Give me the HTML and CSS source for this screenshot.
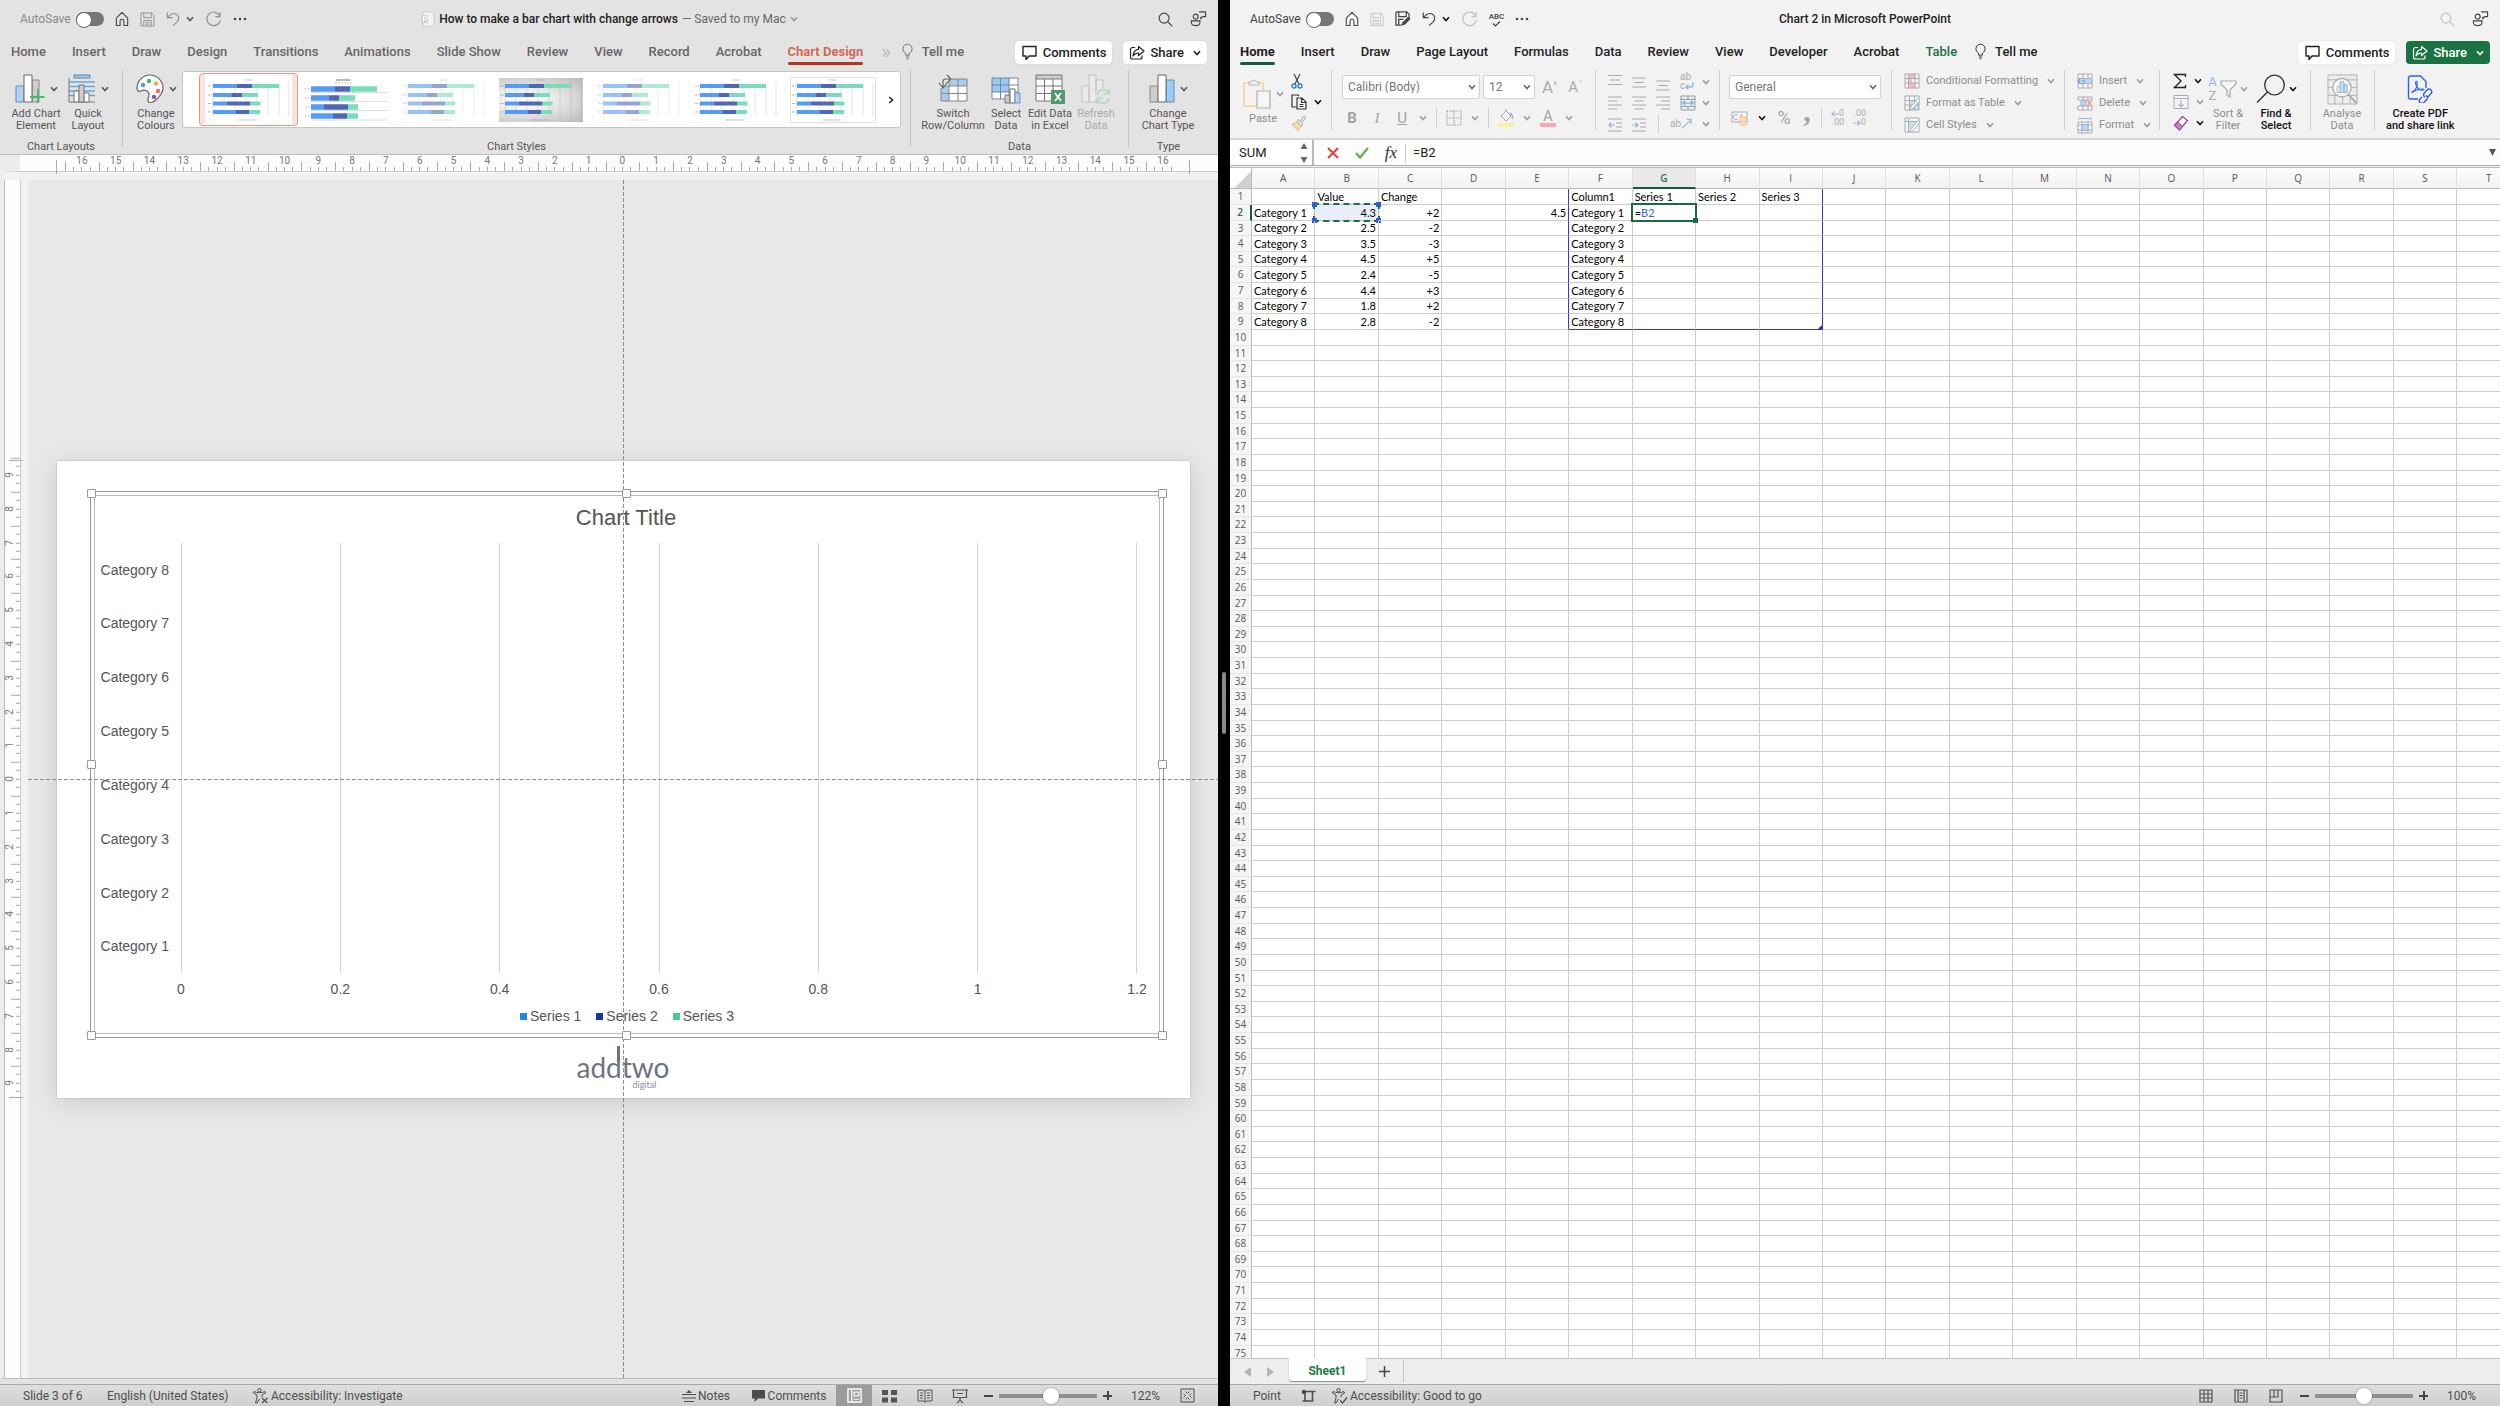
FILE: index.html
```
<!DOCTYPE html>
<html lang="en-GB">
<head>
<meta charset="utf-8">
<title>Chart 2 in Microsoft PowerPoint</title>
<link rel="stylesheet" href="styles.css">
</head>
<body>
<svg class="sprite" aria-hidden="true">
  <symbol id="chev" viewBox="0 0 8 6"><path d="M1 1.2 4 4.6 7 1.2" fill="none" stroke="currentColor" stroke-width="1.5"/></symbol>
  <symbol id="home" viewBox="0 0 16 18"><path d="M1.5 8 8 1.5 14.500 8v8.500h-4.300v-5a2.200 2.200 0 0 0-4.400 0v5H1.500z" fill="none" stroke="currentColor" stroke-width="1.2" stroke-linejoin="round"/></symbol>
  <symbol id="save" viewBox="0 0 16 16"><path d="M1 1h11.500L15 3.500V15H1zM4 1v5h8V1M4 15V9h8v6M6 11h4M6 13h4" fill="none" stroke="currentColor"/></symbol>
  <symbol id="saveas" viewBox="0 0 17 17"><path d="M1 1h11.500L15 3.500V8M7 15H1V1M4 1v5h8V1M4 15V9h5" fill="none" stroke="currentColor" stroke-width="1.300"/><path d="M7 15.500 8 12l6-6 2.500 2.500-6 6z" fill="currentColor"/></symbol>
  <symbol id="undo" viewBox="0 0 16 17"><path d="M1.500 1v6h6M1.500 7C5 3 8 1.500 11 2.500c4 1.500 4.500 6 2 9L8 16" fill="none" stroke="currentColor" stroke-width="1.300"/></symbol>
  <symbol id="redo" viewBox="0 0 18 17"><path d="M16 1v5h-5M16 6A7.200 7.200 0 1 0 16.200 10" fill="none" stroke="currentColor" stroke-width="1.200"/></symbol>
  <symbol id="dots" viewBox="0 0 14 4"><g fill="currentColor"><circle cx="2" cy="2" r="1.300"/><circle cx="7" cy="2" r="1.300"/><circle cx="12" cy="2" r="1.300"/></g></symbol>
  <symbol id="search" viewBox="0 0 16 16"><circle cx="6.500" cy="6.500" r="5.300" fill="none" stroke="currentColor" stroke-width="1.200"/><path d="m10.300 10.300 5 5" stroke="currentColor" stroke-width="1.300"/></symbol>
  <symbol id="person" viewBox="0 0 18 18"><g fill="none" stroke="currentColor" stroke-width="1.200"><circle cx="6" cy="6.500" r="2.600"/><path d="M1.500 11h9v2c0 4-9 4-9 0z"/><path d="M9.500 1.500h7v5h-3l-2 2v-2"/></g></symbol>
  <symbol id="bulb" viewBox="0 0 12 18"><path d="M4 13v-2C2 9.500 1 8 1 6a5 5 0 0 1 10 0c0 2-1 3.500-3 5v2zM4.200 15h3.600M5 17h2" fill="none" stroke="currentColor"/></symbol>
  <symbol id="bubble" viewBox="0 0 16 16"><path d="M1.500 1.500h13v9.500H7.500L4.500 14.500V11h-3z" fill="none" stroke="currentColor" stroke-width="1.400" stroke-linejoin="round"/></symbol>
  <symbol id="share" viewBox="0 0 16 16"><path d="M6 2.500H3.500a2 2 0 0 0-2 2V12a2 2 0 0 0 2 2H11a2 2 0 0 0 2-2v-1.500M9.500 1.500 15 6l-5.500 4.500V8C7 8 5.500 8.500 4 11c.3-4 2.200-6.300 5.500-6.700z" fill="none" stroke="currentColor" stroke-width="1.200" stroke-linejoin="round"/></symbol>
  <symbol id="pptdoc" viewBox="0 0 15 16"><path d="M3 1h8l3 3v11H3z" fill="#f4f4f4" stroke="#ccc"/><path d="M1 4h7v8H1z" fill="#d2d2d2"/><path d="M3.500 10.500v-5h2a1.500 1.500 0 0 1 0 3h-2" fill="none" stroke="#fff"/></symbol>

  <symbol id="addchart" viewBox="0 0 30 30"><path d="M1 12h8v16H1z" fill="#b4d2ee" stroke="#5a8fbe"/><path d="M17 6h7v22h-7z" fill="#cfcccb" stroke="#8d8a88"/><path d="M9 1h8v27H9z" fill="#fff" stroke="#666"/><path d="M23 15v14M15 23h14.500" stroke="#4fb573" stroke-width="2"/></symbol>
  <symbol id="quick" viewBox="0 0 28 30"><path d="M6 1h16v3H6z" fill="#a9c9e8" stroke="#5585b5"/><path d="M1 8h26M1 12.500h26M1 17h26M1 21.500h26" stroke="#64a5dc" stroke-width="1.500"/><path d="M1 4v24h26" fill="none" stroke="#777"/><path d="M6 17h5v11H6zM16 19h5v9h-5z" fill="#fff" stroke="#777"/><path d="M11 11h5v17h-5z" fill="#cfcccb" stroke="#777"/></symbol>
  <symbol id="palette" viewBox="0 0 28 30"><path d="M14 1C7 1 1 7 1 14c0 3 2 4 4 3 4-2 8 0 8 4 0 3-2 4-1 6 1 3 6 1 9-2 3-3 6-7 6-11C27 7 21 1 14 1z" fill="#fdfdfd" stroke="#666" stroke-width="1.200"/><circle cx="7" cy="11" r="2.200" fill="#5a9bd0"/><circle cx="13" cy="7" r="2.200" fill="#4fae72"/><circle cx="20" cy="9.500" r="2.200" fill="#f2a35e"/><circle cx="22" cy="17" r="2.200" fill="#ee6a6a"/><circle cx="18" cy="23" r="2.200" fill="#a24bb3"/></symbol>
  <symbol id="switch" viewBox="0 0 30 30"><path d="M3 5h26v22H3z" fill="#fff"/><path d="M11 5h18v7H11zM3 12h8v15H3z" fill="#a9cdec"/><path d="M3 5h26v22H3zM3 12h26M3 19.500h26M11 5v22M20 5v22" fill="none" stroke="#858585"/><path d="M0 1h14v4L5 14H0z" fill="#e3e3e3"/><path d="M1 9l4 5 4-5M5 14V8c0-2 1-3 3-3h5M9 1l4 4-4 4" fill="none" stroke="#666" stroke-width="1.200"/></symbol>
  <symbol id="select" viewBox="0 0 30 30"><path d="M1 4h26v21H1z" fill="#fff"/><path d="M1 4h17v14H1z" fill="#9cc7ee"/><path d="M1 4h26v21H1zM1 11h26M1 18h26M9.500 4v21M18 4v21" fill="none" stroke="#6b87a3"/><path d="M14 21h5v8h-5z" fill="#cfcccb" stroke="#777"/><path d="M19 15h5v14h-5z" fill="#fff" stroke="#666"/><path d="M24 19h5v10h-5z" fill="#b4d6f4" stroke="#6b93b8"/></symbol>
  <symbol id="editx" viewBox="0 0 30 30"><path d="M1 1h26v26H1z" fill="#fff"/><path d="M1 1h26v4H1z" fill="#cfcccb"/><path d="M1 1h26v26H1zM1 5h26M1 12h26M1 19.500h26M9.500 5v22M18 5v22" fill="none" stroke="#777"/><path d="M16 16h14v14H16z" fill="#4d9a6c"/><path d="m20 19 6 8M26 19l-6 8" stroke="#fff" stroke-width="1.800"/></symbol>
  <symbol id="refresh" viewBox="0 0 30 30"><path d="M1 12h7v16H1zM8 1h7v27H8zM15 6h7v14h-7z" fill="#eaeaea" stroke="#c2c2c2"/><circle cx="22" cy="22" r="8" fill="#e3e3e3"/><path d="M16 21a6.500 6.500 0 0 1 12-2M28.500 14.500V20H23M28.500 24a6.500 6.500 0 0 1-12 2M16 30v-5.500h5.500" fill="none" stroke="#b3d9c0" stroke-width="1.600"/></symbol>
  <symbol id="ctype" viewBox="0 0 26 30"><path d="M1 12h8v16H1z" fill="#cfcccb" stroke="#8d8a88"/><path d="M17 6h8v22h-8z" fill="#9ccbf5" stroke="#5a8fbe"/><path d="M9 1h8v27H9z" fill="#fff" stroke="#666"/></symbol>

  <symbol id="bars" viewBox="0 0 84 44">
    <path d="M6 4v34M17 4v34M28 4v34M39 4v34M50 4v34M61 4v34M72 4v34M82 4v34" stroke="#8888" stroke-width=".4"/>
    <path d="M38 2h8M32 42h18M1 8h4M1 17h4M1 25.500h4M1 34h4" stroke="#999" stroke-width=".7" stroke-dasharray="2 .6"/>
    <path d="M6 8h24M6 17h19M6 25.500h13.500M6 34h23" stroke="#579bf9" stroke-width="3.800"/>
    <path d="M30 8h15M25 17h10M19.500 25.500h24M29 34h13" stroke="#5068b4" stroke-width="3.800"/>
    <path d="M45 8h27M35 17h16M43.500 25.500h10M42 34h11" stroke="#7bdcbd" stroke-width="3.800"/>
  </symbol>
  <symbol id="bars-wide" viewBox="0 0 84 44">
    <path d="M6 14.500h76M6 23.500h76M6 32.500h76M6 42h76" stroke="#aaa" stroke-width=".4"/>
    <path d="M31 2h15" stroke="#555" stroke-width="1" stroke-dasharray="2 .5"/><path d="M30 5h17M0 11h5M0 20h5M0 29h5M0 38h5" stroke="#999" stroke-width=".6" stroke-dasharray="2 1"/>
    <path d="M6 11h24M6 20h18M6 29h13M6 38h22" stroke="#579bf9" stroke-width="5.400"/>
    <path d="M30 11h15M24 20h10M19 29h24M28 38h14" stroke="#5068b4" stroke-width="5.400"/>
    <path d="M45 11h27M34 20h16M43 29h10M42 38h11" stroke="#7bdcbd" stroke-width="5.400"/>
  </symbol>

  <symbol id="notes" viewBox="0 0 14 14"><path d="M0 5.500h14M0 9h14M2 12.500h10" stroke="currentColor" stroke-width="1.200"/><path d="m4 4 3-3 3 3z" fill="currentColor"/></symbol>
  <symbol id="comm" viewBox="0 0 14 14"><path d="M0 1h13v8.500H6L2.500 13V9.500H0z" fill="currentColor"/></symbol>
  <symbol id="a11y" viewBox="0 0 16 16"><g fill="none" stroke="currentColor"><circle cx="6.500" cy="2.200" r="1.700"/><path d="M1 3.500c3 1.600 8 1.600 11 0l.5 1.500-3.500 2v2M1 3.500 .5 5 4 7v3l-1.500 5h1.500L6.500 11"/></g></symbol>
  <symbol id="a11y-x" viewBox="0 0 16 16"><use href="#a11y"/><path d="m9 10 5.500 5M14.500 10 9 15" stroke="currentColor" stroke-width="1.200"/></symbol>
  <symbol id="a11y-ok" viewBox="0 0 16 16"><use href="#a11y"/><path d="m8 12.500 2.500 2.500L15 9.500" fill="none" stroke="currentColor" stroke-width="1.200"/></symbol>
  <symbol id="normal" viewBox="0 0 16 16"><path d="M1 1h14v14H1z" fill="none" stroke="#fff" stroke-width="1.500"/><path d="M5 1v14M7.500 4.500h5v4h-5zM7 12h6" fill="none" stroke="#fff" stroke-width="1.300"/></symbol>
  <symbol id="sorter" viewBox="0 0 16 14"><path d="M0 1h6v5H0zM9 1h6v5H9zM0 8.500h6v5H0zM9 8.500h6v5H9z" fill="currentColor"/></symbol>
  <symbol id="reading" viewBox="0 0 16 16"><path d="M1 2h5l2 1 2-1h5v11h-5l-2 1-2-1H1zM8 3v11M3 5h3M3 7.500h3M3 10h3M10 5h3M10 7.500h3M10 10h3" fill="none" stroke="currentColor"/></symbol>
  <symbol id="present" viewBox="0 0 16 16"><path d="M0 2h16M1.500 2v7.500h13V2M5 5.500h6M8 10v3M5 15l3-3 3 3" fill="none" stroke="currentColor" stroke-width="1.200"/></symbol>
  <symbol id="fit" viewBox="0 0 15 15"><path d="M1 1h13v13H1zM5.500 3.500 7.500 5.500l2-2M5.500 11.500l2-2 2 2M3.500 5.500l2 2-2 2M11.500 5.500l-2 2 2 2" fill="none" stroke="currentColor"/></symbol>
  <symbol id="macro" viewBox="0 0 15 14"><path d="M5 2.500h9.500M11.500 2.500v9M4 4.500v7M1.500 12h11" fill="none" stroke="currentColor" stroke-width="1.600"/><circle cx="3" cy="3" r="2.300" fill="currentColor"/></symbol>
  <symbol id="vgrid" viewBox="0 0 14 14"><path d="M1 1h12v12H1zM1 5h12M1 9h12M5 1v12M9 1v12" fill="none" stroke="currentColor" stroke-width="1.200"/></symbol>
  <symbol id="vpage" viewBox="0 0 14 14"><path d="M1 1h12v12H1zM4 1.500v11M10 1.500v11M5.500 4h3M5.500 6.500h3M5.500 9h3" fill="none" stroke="currentColor" stroke-width="1.200"/></symbol>
  <symbol id="vbreak" viewBox="0 0 14 14"><path d="M1 1h12v12H1zM1 8h8V1M5 1v7" fill="none" stroke="currentColor" stroke-width="1.200"/></symbol>

  <symbol id="paste" viewBox="0 0 28 30"><path d="M1 4h19v23H1z" fill="#fdf3e6" stroke="#f0cfa4" stroke-width="1.500"/><path d="M4 6h13v18H4z" fill="#f2f2f2"/><path d="M6 6V3h3a2 2 0 0 1 4 0h3v3z" fill="#f5f5f5" stroke="#b5b5b5"/><path d="M14 12h13v17H14z" fill="#f5f5f5" stroke="#b0b0b0" stroke-width="1.200"/></symbol>
  <symbol id="cut" viewBox="0 0 12 16"><path d="M3 1l5 10M9 1 4 11" stroke="#444" stroke-width="1.200"/><g fill="none" stroke="#2f7fd0" stroke-width="1.400"><circle cx="3" cy="13" r="2"/><circle cx="9" cy="13" r="2"/></g></symbol>
  <symbol id="copy" viewBox="0 0 16 16"><path d="M6 13H1V1h6l1 1M6 4h5l4 4v7H6zM10.500 4v4.500H15M8.500 10.500h4M8.500 12.500h4" fill="none" stroke="#333" stroke-width="1.200"/></symbol>
  <symbol id="brush" viewBox="0 0 16 16"><path d="m1 9 6-2 3 4-3 5z" fill="#fbd9ae" stroke="#eebb85"/><path d="m6 6 4 5 2-1.500L8 4.500zM9.500 6 13 1l2 1.500-4 5" fill="#eee" stroke="#aaa"/></symbol>
  <symbol id="borders" viewBox="0 0 16 16"><path d="M1 1h14v14H1zM8 1v14M1 8h14" fill="none" stroke="#999" stroke-width="1.200" stroke-dasharray="1.200 1"/></symbol>
  <symbol id="fill" viewBox="0 0 16 18"><path d="m3 7 5-5 5 5-5 5zM8 2V0" fill="#f6f6f6" stroke="#a8a8a8"/><path d="M12 4c2 1 3 4 2.500 6" fill="none" stroke="#8fb9dc" stroke-width="1.500"/><path d="M0 14h16v4H0z" fill="#f5f2a0"/></symbol>
  <symbol id="al-t" viewBox="0 0 14 20"><path d="M0 3.500h14M2 8h10M0 12.500h14" stroke="#aaa" stroke-width="1.200"/></symbol>
  <symbol id="al-m" viewBox="0 0 14 20"><path d="M0 6h14M2 10.500h10M0 15h14" stroke="#aaa" stroke-width="1.200"/></symbol>
  <symbol id="al-b" viewBox="0 0 14 20"><path d="M0 9h14M2 13.500h10M0 18h14" stroke="#aaa" stroke-width="1.200"/></symbol>
  <symbol id="al-l" viewBox="0 0 14 20"><path d="M0 4h14M0 8h9M0 12h14M0 16h9" stroke="#aaa" stroke-width="1.200"/></symbol>
  <symbol id="al-c" viewBox="0 0 14 20"><path d="M0 4h14M2.500 8h9M0 12h14M2.500 16h9" stroke="#aaa" stroke-width="1.200"/></symbol>
  <symbol id="al-r" viewBox="0 0 14 20"><path d="M0 4h14M5 8h9M0 12h14M5 16h9" stroke="#aaa" stroke-width="1.200"/></symbol>
  <symbol id="ind-l" viewBox="0 0 14 20"><path d="M0 5h14M8 9h6M8 13h6M0 17h14" stroke="#aaa" stroke-width="1.200"/><path d="M7 11H1m2.500-2.500L1 11l2.500 2.500" fill="none" stroke="#8fb9dc" stroke-width="1.200"/></symbol>
  <symbol id="ind-r" viewBox="0 0 14 20"><path d="M0 5h14M8 9h6M8 13h6M0 17h14" stroke="#aaa" stroke-width="1.200"/><path d="M0 11h6M3.500 8.500 6 11l-2.500 2.500" fill="none" stroke="#8fb9dc" stroke-width="1.200"/></symbol>
  <symbol id="merge" viewBox="0 0 16 20"><path d="M1 3h14v14H1z" fill="#e2eef8" stroke="#9a9a9a"/><path d="M1 6.500h14M1 13.500h14M8 3v3.500M8 13.500V17" stroke="#9a9a9a"/><path d="M3 10h10M5 8l-2 2 2 2M11 8l2 2-2 2" fill="none" stroke="#74a9d8" stroke-width="1.200"/></symbol>
  <symbol id="returnarrow" viewBox="0 0 9 9"><path d="M8 0v3a2 2 0 0 1-2 2H1M3.500 2.500 1 5l2.500 2.500" fill="none" stroke="#8fb9dc" stroke-width="1.300"/></symbol>
  <symbol id="dirarrow" viewBox="0 0 12 12"><path d="M1 11 11 2M6 1.500h5v5" fill="none" stroke="#8fb9dc" stroke-width="1.200"/></symbol>
  <symbol id="money" viewBox="0 0 18 17"><path d="M1 2h15v10H1z" fill="#f4f4f4" stroke="#aaa"/><path d="M6.500 5a2.500 2.500 0 1 0 0 4M12 5a2.500 2.500 0 0 0-3 2" fill="none" stroke="#aaa"/><path d="M9 8.500c0-2 7-2 7 0V14c0 2-7 2-7 0z" fill="#fbe0c6" stroke="#efb98a"/><path d="M9 11c1 1.300 6 1.300 7 0" fill="none" stroke="#efb98a"/></symbol>
  <symbol id="arr-l" viewBox="0 0 9 8"><path d="M9 4H1m3-3L1 4l3 3" fill="none" stroke="#8fb9dc" stroke-width="1.200"/></symbol>
  <symbol id="arr-r" viewBox="0 0 9 8"><path d="M0 4h8M5 1l3 3-3 3" fill="none" stroke="#8fb9dc" stroke-width="1.200"/></symbol>
  <symbol id="cond" viewBox="0 0 16 16"><path d="M1 1h14v14H1z" fill="#f6f6f6"/><path d="M4 1h7v4H4zM4 5h4v5H4zM4 10h7v5H4z" fill="#f6bcbc"/><path d="M1 1h14v14H1zM1 5.500h14M1 10h14M4.500 1v14M11 1v14" fill="none" stroke="#aaa"/></symbol>
  <symbol id="fmtt" viewBox="0 0 16 16"><path d="M1 1h14v14H1z" fill="#f6f6f6"/><path d="M6 6h9v9H6z" fill="#c5dff3"/><path d="M1 1h14v14H1zM1 5.500h14M1 10h14M5.500 1v14M10.500 1v14" fill="none" stroke="#aaa"/><path d="M14.500 3 8 10.500l-3.500 5 5-2.500L16 5z" fill="#fff" stroke="#8fb9dc"/></symbol>
  <symbol id="cstyle" viewBox="0 0 16 16"><path d="M1 1h14v14H1z" fill="#f6f6f6"/><path d="M4.500 4.500h8v7h-8z" fill="#c5dff3"/><path d="M1 1h14v14H1zM1 4.500h14M4.500 1v14" fill="none" stroke="#aaa"/><path d="M14.500 3 8 10.500l-3.500 5 5-2.500L16 5z" fill="#fff" stroke="#8fb9dc"/></symbol>
  <symbol id="ins" viewBox="0 0 16 16"><path d="M1 1h14v14H1z" fill="#f6f6f6"/><path d="M1 1h14v14H1zM1 5.500h14M1 10.500h14M6 1v14M11 1v14" fill="none" stroke="#aaa"/><path d="M7 5.500h8v5H7z" fill="#b9d8f0" stroke="#8fb9dc"/><path d="M8 8H1m3-3L1 8l3 3" fill="none" stroke="#6ea7d8" stroke-width="1.200"/></symbol>
  <symbol id="del" viewBox="0 0 16 16"><path d="M1 2h14v3H1zM1 11h14v4H1zM6 2v3M11 2v3M6 11v4M11 11v4" fill="#f6f6f6" stroke="#aaa"/><path d="M4 6h5v4.500H4z" fill="#b9d8f0" stroke="#8fb9dc"/><path d="m10 5 5 6M15 5l-5 6" stroke="#f09a9a" stroke-width="1.300"/></symbol>
  <symbol id="fmt" viewBox="0 0 16 18"><path d="M2 1v3M14 1v3M3 2.500h10" stroke="#8fb9dc"/><path d="M1 6h14v11H1zM1 9h14M1 14h14M5 6v11M11 6v11" fill="#f6f6f6" stroke="#aaa"/><path d="M5 8.500h6v6H5z" fill="#b9d8f0" stroke="#8fb9dc"/></symbol>
  <symbol id="sigma" viewBox="0 0 14 16"><path d="M12.500 4V1.500h-11L8 8l-6.500 6.500h11V12" fill="none" stroke="#222" stroke-width="1.300"/></symbol>
  <symbol id="filld" viewBox="0 0 16 16"><path d="M1 1.500h14v13H1zM1 4.500h14" fill="#f6f6f6" stroke="#aaa"/><path d="M8 6v7M5.500 10.500 8 13l2.500-2.500" fill="none" stroke="#8fb9dc" stroke-width="1.200"/></symbol>
  <symbol id="eraser" viewBox="0 0 16 16"><path d="m1.500 10.500 8-9 5 4-8 9.500z" fill="#fff" stroke="#933a9a" stroke-width="1.200"/><path d="m1.500 10.500 3-3.500 5 4.500-3 3.500z" fill="#c583c9" stroke="#933a9a"/></symbol>
  <symbol id="funnel" viewBox="0 0 17 18"><path d="M1 1h15v3l-6 6v7l-3-2v-5L1 4z" fill="#f6f6f6" stroke="#aaa" stroke-width="1.200"/></symbol>
  <symbol id="find" viewBox="0 0 30 30"><circle cx="18.500" cy="11" r="9.800" fill="none" stroke="#333" stroke-width="1.300"/><path d="M11.500 18 1 28.500" stroke="#333" stroke-width="1.500"/></symbol>
  <symbol id="analyse" viewBox="0 0 32 32"><path d="M1 1h30v30H1zM1 6h30M1 14h30M1 22h30M8 22v9M16 22v9M24 22v9" fill="#ececec" stroke="#b0b0b0"/><circle cx="15.500" cy="14" r="9.500" fill="#f8f8f8" stroke="#a8a8a8" stroke-width="1.200"/><path d="M10.500 13h3v6h-3z" fill="#fff" stroke="#aaa"/><path d="M13.500 8h4v11h-4zM17.500 11h3.500v8h-3.500z" fill="#c5dff3" stroke="#8fb9dc"/><path d="m22 21 8.500 9" stroke="#a8a8a8" stroke-width="1.800"/></symbol>
  <symbol id="pdf" viewBox="0 0 26 28"><g fill="none" stroke="#2d63e2" stroke-width="1.400"><path d="M11 24H3.500a2 2 0 0 1-2-2V3a2 2 0 0 1 2-2h10L19 6.500V13"/><path d="M5 17c5-2 6-8 5-10s-2 0-1 3 4 6 7 5-2-1.500-6 0-6 3.500-5 2z" stroke-width="1.100"/><path d="m15 22-2 2a2.600 2.600 0 0 0 4 3.500l3-3.500c1-1.500 0-3-1-3.500M21 22l3-3.500a2.600 2.600 0 0 0-4-3.500l-3 3.500c-1 1.500 0 3 1 3.500"/></g></symbol>
</svg>

<main class="split">
  <section class="app ppt" aria-label="PowerPoint">
    <header class="titlebar">
      <div class="quick">
        <label class="autosave">AutoSave <input type="checkbox" class="toggle"></label>
        <button aria-label="Home"><svg width="14" height="16"><use href="#home"/></svg></button>
        <button class="dim" aria-label="Save"><svg width="15" height="15"><use href="#save"/></svg></button>
        <button class="dim pair" aria-label="Undo"><svg width="14" height="16"><use href="#undo"/></svg><svg class="chev"><use href="#chev"/></svg></button>
        <button class="dim" aria-label="Redo"><svg width="17" height="16"><use href="#redo"/></svg></button>
        <button aria-label="More"><svg width="14" height="4"><use href="#dots"/></svg></button>
      </div>
      <h1 class="doc"><svg width="15" height="16"><use href="#pptdoc"/></svg><span>How to make a bar chart with change arrows</span><span class="muted">— Saved to my Mac</span><svg class="chev muted"><use href="#chev"/></svg></h1>
      <div class="corner">
        <button aria-label="Search"><svg width="15" height="15"><use href="#search"/></svg></button>
        <button aria-label="Presence"><svg width="17" height="18"><use href="#person"/></svg></button>
      </div>
    </header>
    <nav class="tabs">
      <button>Home</button><button>Insert</button><button>Draw</button><button>Design</button><button>Transitions</button><button>Animations</button><button>Slide Show</button><button>Review</button><button>View</button><button>Record</button><button>Acrobat</button><button class="on">Chart Design</button>
      <span class="more">»</span>
      <button class="tell"><svg width="11" height="17"><use href="#bulb"/></svg>Tell me</button>
      <div class="actions">
        <button class="pill"><svg width="17" height="16"><use href="#bubble"/></svg>Comments</button>
        <button class="pill"><svg width="16" height="16"><use href="#share"/></svg>Share<svg class="chev"><use href="#chev"/></svg></button>
      </div>
    </nav>
    <div class="ribbon ppt-ribbon">
      <div class="group g-layouts">
        <div class="row">
          <button class="big w52"><span class="pic"><svg width="30" height="30"><use href="#addchart"/></svg><svg class="chev"><use href="#chev"/></svg></span>Add Chart<br>Element</button>
          <button class="big w52"><span class="pic"><svg width="28" height="30"><use href="#quick"/></svg><svg class="chev"><use href="#chev"/></svg></span>Quick<br>Layout</button>
        </div>
        <div class="caption">Chart Layouts</div>
      </div>
      <div class="group g-styles">
        <div class="row">
          <button class="big w52"><span class="pic"><svg width="28" height="30"><use href="#palette"/></svg><svg class="chev"><use href="#chev"/></svg></span>Change<br>Colours</button>
          <div class="gallery">
            <button class="style on"><svg><use href="#bars"/></svg></button>
            <button class="style"><svg><use href="#bars-wide"/></svg></button>
            <button class="style pale"><svg><use href="#bars"/></svg></button>
            <button class="style metal"><svg><use href="#bars"/></svg></button>
            <button class="style pale"><svg><use href="#bars"/></svg></button>
            <button class="style"><svg><use href="#bars"/></svg></button>
            <button class="style framed"><svg><use href="#bars"/></svg></button>
            <button class="next" aria-label="More styles"><svg class="chev"><use href="#chev"/></svg></button>
          </div>
        </div>
        <div class="caption">Chart Styles</div>
      </div>
      <div class="group g-data">
        <div class="row">
          <button class="big w64"><span class="pic"><svg width="30" height="30"><use href="#switch"/></svg></span>Switch<br>Row/Column</button>
          <button class="big w42"><span class="pic"><svg width="30" height="30"><use href="#select"/></svg></span>Select<br>Data</button>
          <button class="big w46"><span class="pic"><svg width="30" height="30"><use href="#editx"/></svg></span>Edit Data<br>in Excel</button>
          <button class="big w46 off"><span class="pic"><svg width="30" height="30"><use href="#refresh"/></svg></span>Refresh<br>Data</button>
        </div>
        <div class="caption">Data</div>
      </div>
      <div class="group g-type">
        <div class="row">
          <button class="big w64"><span class="pic"><svg width="26" height="30"><use href="#ctype"/></svg><svg class="chev"><use href="#chev"/></svg></span>Change<br>Chart Type</button>
        </div>
        <div class="caption">Type</div>
      </div>
    </div>
    <div class="editor">
      <div class="hruler"><div class="scale" id="hscale"></div></div>
      <div class="vruler"><div class="scale" id="vscale"></div></div>
      <div class="canvas">
        <article class="slide">
          <figure class="frame">
            <div class="chart">
              <h2>Chart Title</h2>
              <div class="plot">
                <ul class="cats"><li>Category 8</li><li>Category 7</li><li>Category 6</li><li>Category 5</li><li>Category 4</li><li>Category 3</li><li>Category 2</li><li>Category 1</li></ul>
                <div class="lines"><i></i><i></i><i></i><i></i><i></i><i></i></div>
              </div>
              <div class="axis"><span>0</span><span>0.2</span><span>0.4</span><span>0.6</span><span>0.8</span><span>1</span><span>1.2</span></div>
              <ul class="legend"><li class="s1">Series 1</li><li class="s2">Series 2</li><li class="s3">Series 3</li></ul>
            </div>
            <i class="knob tl"></i><i class="knob tc"></i><i class="knob tr"></i><i class="knob ml"></i><i class="knob mr"></i><i class="knob bl"></i><i class="knob bc"></i><i class="knob br"></i>
          </figure>
          <div class="logo"><span class="word">ad<span class="tall">d</span>two</span><span class="sub">digital</span></div>
        </article>
        <i class="guide-v"></i><i class="guide-h"></i>
      </div>
    </div>
    <footer class="status">
      <span class="s-slide">Slide 3 of 6</span><span class="s-lang">English (United States)</span>
      <button><svg width="16" height="16"><use href="#a11y-x"/></svg>Accessibility: Investigate</button>
      <div class="right">
        <button class="s-notes"><svg width="14" height="14"><use href="#notes"/></svg>Notes</button>
        <button class="s-comm"><svg width="14" height="14"><use href="#comm"/></svg>Comments</button>
        <button class="view on" aria-label="Normal"><svg width="15" height="15"><use href="#normal"/></svg></button>
        <button class="view" aria-label="Slide sorter"><svg width="16" height="14"><use href="#sorter"/></svg></button>
        <button class="view" aria-label="Reading view"><svg width="16" height="16"><use href="#reading"/></svg></button>
        <button class="view" aria-label="Slide show"><svg width="16" height="16"><use href="#present"/></svg></button>
        <button class="sign minus" aria-label="Zoom out"></button><input type="range" class="zoom" aria-label="Zoom" min="0" max="100" value="54"><button class="sign plus" aria-label="Zoom in"></button>
        <span class="pct">122%</span>
        <button class="s-fit" aria-label="Fit slide"><svg width="15" height="15"><use href="#fit"/></svg></button>
      </div>
    </footer>
  </section>

  <div class="divider" role="separator"><i></i></div>

  <section class="app xls" aria-label="Excel">
    <header class="titlebar">
      <div class="quick">
        <label class="autosave">AutoSave <input type="checkbox" class="toggle"></label>
        <button aria-label="Home"><svg width="14" height="16"><use href="#home"/></svg></button>
        <button class="faint" aria-label="Save"><svg width="14" height="15"><use href="#save"/></svg></button>
        <button aria-label="Save as"><svg width="16" height="16"><use href="#saveas"/></svg></button>
        <button class="pair" aria-label="Undo"><svg width="14" height="16"><use href="#undo"/></svg><svg class="chev dark"><use href="#chev"/></svg></button>
        <button class="faint" aria-label="Redo"><svg width="17" height="16"><use href="#redo"/></svg></button>
        <button class="abc"><span>ABC</span><svg width="9" height="6" viewBox="0 0 9 6"><path d="m1 2.500 2.500 2.500L8 .5" fill="none" stroke="currentColor" stroke-width="1.200"/></svg></button>
        <button aria-label="More"><svg width="14" height="4"><use href="#dots"/></svg></button>
      </div>
      <h1 class="doc"><span>Chart 2 in Microsoft PowerPoint</span></h1>
      <div class="corner">
        <button class="faint" aria-label="Search"><svg width="15" height="15"><use href="#search"/></svg></button>
        <button aria-label="Presence"><svg width="17" height="18"><use href="#person"/></svg></button>
      </div>
    </header>
    <nav class="tabs">
      <button class="on">Home</button><button>Insert</button><button>Draw</button><button>Page Layout</button><button>Formulas</button><button>Data</button><button>Review</button><button>View</button><button>Developer</button><button>Acrobat</button><button class="ctx">Table</button>
      <button class="tell"><svg width="11" height="17"><use href="#bulb"/></svg>Tell me</button>
      <div class="actions">
        <button class="pill"><svg width="17" height="16"><use href="#bubble"/></svg>Comments</button>
        <button class="pill green"><svg width="16" height="16"><use href="#share"/></svg>Share<svg class="chev"><use href="#chev"/></svg></button>
      </div>
    </nav>
    <div class="ribbon xls-ribbon">
      <div class="xg x-clip">
        <button class="big w46 mute"><span class="pic"><svg width="28" height="30"><use href="#paste"/></svg><svg class="chev"><use href="#chev"/></svg></span>Paste</button>
        <div class="stack">
          <button aria-label="Cut"><svg width="12" height="16"><use href="#cut"/></svg></button>
          <button aria-label="Copy"><svg width="16" height="16"><use href="#copy"/></svg><svg class="chev dark"><use href="#chev"/></svg></button>
          <button aria-label="Format painter"><svg width="16" height="16"><use href="#brush"/></svg></button>
        </div>
      </div>
      <div class="xg x-font">
        <div class="line">
          <label class="combo c-font"><select aria-label="Font"><option>Calibri (Body)</option></select><svg class="chev"><use href="#chev"/></svg></label>
          <label class="combo c-size"><select aria-label="Font size"><option>12</option></select><svg class="chev"><use href="#chev"/></svg></label>
          <button class="grow">A<sup>^</sup></button><button class="shrink">A<sup>ˇ</sup></button>
        </div>
        <div class="line tools">
          <button class="t b">B</button><button class="t i">I</button><button class="t u">U</button><svg class="chev"><use href="#chev"/></svg><i class="bar"></i>
          <button aria-label="Borders"><svg width="16" height="16"><use href="#borders"/></svg></button><svg class="chev"><use href="#chev"/></svg><i class="bar"></i>
          <button aria-label="Fill colour"><svg width="16" height="18"><use href="#fill"/></svg></button><svg class="chev"><use href="#chev"/></svg>
          <button class="fontcol">A</button><svg class="chev"><use href="#chev"/></svg>
        </div>
      </div>
      <div class="xg x-align">
        <svg width="14" height="20"><use href="#al-t"/></svg><svg width="14" height="20"><use href="#al-m"/></svg><svg width="14" height="20"><use href="#al-b"/></svg><span class="wrap">ab<br>c<svg width="9" height="9"><use href="#returnarrow"/></svg></span><svg class="chev"><use href="#chev"/></svg>
        <svg width="14" height="20"><use href="#al-l"/></svg><svg width="14" height="20"><use href="#al-c"/></svg><svg width="14" height="20"><use href="#al-r"/></svg><svg width="16" height="20"><use href="#merge"/></svg><svg class="chev"><use href="#chev"/></svg>
        <svg width="14" height="20"><use href="#ind-l"/></svg><svg width="14" height="20"><use href="#ind-r"/></svg><i class="bar"></i><span class="orient">ab<svg width="11" height="11"><use href="#dirarrow"/></svg></span><svg class="chev"><use href="#chev"/></svg>
      </div>
      <div class="xg x-num">
        <label class="combo c-num"><select aria-label="Number format"><option>General</option></select><svg class="chev"><use href="#chev"/></svg></label>
        <div class="line tools">
          <button aria-label="Currency"><svg width="18" height="17"><use href="#money"/></svg></button><svg class="chev dark"><use href="#chev"/></svg>
          <button class="t pc">%</button><button class="t comma">,</button><i class="bar"></i>
          <button class="dec"><span><svg width="8" height="8"><use href="#arr-l"/></svg>0</span><span>.00</span></button>
          <button class="dec"><span>.00</span><span><svg width="8" height="8"><use href="#arr-r"/></svg>0</span></button>
        </div>
      </div>
      <div class="xg x-list x-styles">
        <button><svg width="16" height="16"><use href="#cond"/></svg>Conditional Formatting<svg class="chev"><use href="#chev"/></svg></button>
        <button><svg width="16" height="16"><use href="#fmtt"/></svg>Format as Table<svg class="chev"><use href="#chev"/></svg></button>
        <button><svg width="16" height="16"><use href="#cstyle"/></svg>Cell Styles<svg class="chev"><use href="#chev"/></svg></button>
      </div>
      <div class="xg x-list x-cells">
        <button><svg width="16" height="16"><use href="#ins"/></svg>Insert<svg class="chev"><use href="#chev"/></svg></button>
        <button><svg width="16" height="16"><use href="#del"/></svg>Delete<svg class="chev"><use href="#chev"/></svg></button>
        <button><svg width="16" height="18"><use href="#fmt"/></svg>Format<svg class="chev"><use href="#chev"/></svg></button>
      </div>
      <div class="xg x-edit">
        <div class="stack">
          <button aria-label="Sum"><svg width="14" height="16"><use href="#sigma"/></svg><svg class="chev dark"><use href="#chev"/></svg></button>
          <button aria-label="Fill"><svg width="16" height="16"><use href="#filld"/></svg><svg class="chev"><use href="#chev"/></svg></button>
          <button aria-label="Clear"><svg width="16" height="16"><use href="#eraser"/></svg><svg class="chev dark"><use href="#chev"/></svg></button>
        </div>
        <button class="big w46 mute"><span class="pic"><span class="az"><b>A</b>Z</span><svg width="17" height="18"><use href="#funnel"/></svg><svg class="chev"><use href="#chev"/></svg></span>Sort &amp;<br>Filter</button>
        <button class="big w46 strong"><span class="pic"><svg width="30" height="30"><use href="#find"/></svg><svg class="chev dark"><use href="#chev"/></svg></span>Find &amp;<br>Select</button>
      </div>
      <div class="xg x-an"><button class="big w52 mute"><span class="pic"><svg width="31" height="31"><use href="#analyse"/></svg></span>Analyse<br>Data</button></div>
      <div class="xg x-pdf"><button class="big strong"><span class="pic"><svg width="26" height="28"><use href="#pdf"/></svg></span>Create PDF<br>and share link</button></div>
    </div>
    <div class="fbar">
      <label class="namebox"><input aria-label="Name box" value="SUM"><svg width="8" height="20" viewBox="0 0 8 20"><path d="M4 0 7.500 6h-7zM4 20 7.500 14h-7z" fill="#666"/></svg></label>
      <button class="f-x" aria-label="Cancel"><svg width="12" height="12" viewBox="0 0 12 12"><path d="m1 1 10 10M11 1 1 11" stroke="#dc4a43" stroke-width="2.200"/></svg></button>
      <button class="f-ok" aria-label="Enter"><svg width="14" height="12" viewBox="0 0 14 12"><path d="m1 6 4 4.500L13 1" fill="none" stroke="#5cb04c" stroke-width="2.200"/></svg></button>
      <button class="f-fx">fx</button>
      <input class="formula" aria-label="Formula" value="=B2">
      <svg class="f-drop" width="7" height="7" viewBox="0 0 7 7"><path d="M0 0h7L3.500 7z" fill="#555"/></svg>
    </div>
    <div class="sheet">
      <table id="grid"><thead></thead><tbody></tbody></table>
    </div>
    <div class="sheetbar">
      <button class="nav" aria-label="Previous sheet"><svg width="7" height="10" viewBox="0 0 7 10"><path d="M7 0v10L0 5z" fill="#b4b4b4"/></svg></button>
      <button class="nav" aria-label="Next sheet"><svg width="7" height="10" viewBox="0 0 7 10"><path d="M0 0v10l7-5z" fill="#b4b4b4"/></svg></button>
      <button class="tab">Sheet1</button>
      <button class="add" aria-label="New sheet"><svg width="11" height="11" viewBox="0 0 11 11"><path d="M5.500 0v11M0 5.500h11" stroke="#444" stroke-width="1.500"/></svg></button>
    </div>
    <footer class="status">
      <span class="s-point">Point</span>
      <button class="s-macro" aria-label="Record macro"><svg width="15" height="14"><use href="#macro"/></svg></button>
      <button><svg width="16" height="16"><use href="#a11y-ok"/></svg>Accessibility: Good to go</button>
      <div class="right">
        <button class="view" aria-label="Normal"><svg width="14" height="14"><use href="#vgrid"/></svg></button>
        <button class="view" aria-label="Page layout"><svg width="14" height="14"><use href="#vpage"/></svg></button>
        <button class="view" aria-label="Page breaks"><svg width="14" height="14"><use href="#vbreak"/></svg></button>
        <button class="sign minus" aria-label="Zoom out"></button><input type="range" class="zoom" aria-label="Zoom" min="0" max="100" value="50"><button class="sign plus" aria-label="Zoom in"></button>
        <span class="pct">100%</span>
      </div>
    </footer>
  </section>
</main>
<script src="app.js"></script>
</body>
</html>
```
FILE: styles.css
```
* { box-sizing: border-box; }
body { margin: 0; background: #000; color: #222; font: 12px/14px Roboto, "Liberation Sans", sans-serif; }
button { border: 0; background: none; padding: 0; margin: 0; font: inherit; color: inherit; display: inline-flex; align-items: center; justify-content: center; white-space: nowrap; }
input, select { font: inherit; color: inherit; margin: 0; }
ul { list-style: none; margin: 0; padding: 0; }
svg { display: block; flex: none; }
i { font-style: normal; }
.sprite { position: absolute; width: 0; height: 0; }
.chev { width: 8px; height: 6px; }
.dark { color: #111; }

.split { display: flex; height: 100vh; overflow: hidden; }
.app { display: flex; flex-direction: column; min-width: 0; overflow: hidden; }
.ppt { flex: 1218; background: #e3e3e3; color: #555; }
.xls { flex: 1270; background: #f2f2f2; }
.divider { flex: none; width: 12px; background: #000; display: flex; align-items: center; justify-content: center; }
.divider i { width: 4px; height: 62px; border-radius: 2px; background: #8a8a8a; }

/* title bar */
.titlebar { flex: none; height: 38px; display: grid; grid-template-columns: 1fr auto 1fr; align-items: center; color: #444; }
.quick { display: flex; align-items: center; gap: 11px; padding-left: 20px; }
.autosave { display: flex; align-items: center; gap: 5px; }
.ppt .autosave { color: #8a8a8a; }
.toggle { appearance: none; width: 28px; height: 14px; border-radius: 7px; background: #777; position: relative; }
.toggle::before { content: ""; position: absolute; left: 0; top: 0; width: 14px; height: 14px; border-radius: 50%; background: #fff; border: 1px solid #666; }
.dim { color: #909090; }
.faint { color: #c0c0c0; }
.pair { gap: 6px; }
.pair .chev { color: #555; }
.pair .chev.dark { color: #111; }
.abc { flex-direction: column; font-size: 8px; line-height: 9px; font-weight: 500; }
.doc { margin: 0; font-size: 12px; line-height: 16px; font-weight: 500; color: #222; display: flex; align-items: center; gap: 4px; }
.doc .muted { font-weight: 400; color: #666; }
.doc .chev { color: #999; }
.corner { display: flex; justify-content: flex-end; align-items: center; gap: 17px; padding-right: 11px; }

/* tabs */
.tabs { flex: none; height: 28px; display: flex; align-items: center; gap: 26px; padding: 0 11px 1px; font-size: 13px; font-weight: 500; }
.tabs > button { height: 26px; position: relative; }
.ppt .tabs { color: #666; }
.xls .tabs { padding: 0 10px 1px; }
.tabs .on::after { content: ""; position: absolute; left: 0; right: 0; bottom: 0; height: 3px; border-radius: 2px; background: #b7351c; }
.ppt .tabs .on { color: #cf6a59; font-weight: 700; }
.xls .tabs .on { font-weight: 700; }
.xls .tabs .on::after { background: #185c37; }
.tabs .ctx { color: #1e7145; }
.more { color: #bbb; font-size: 20px; font-weight: 400; line-height: 20px; margin-left: -8px; }
.tabs .tell { gap: 9px; margin-left: -15px; }
.xls .tabs .tell { margin-left: -8px; }
.actions { margin-left: auto; display: flex; gap: 11px; align-self: flex-start; padding-top: 3px; }
.pill { height: 23px; padding: 0 6px; gap: 5px; background: #fff; border-radius: 4px; color: #222; box-shadow: 0 0 1px #0004; }
.pill .chev { margin-left: 4px; }
.pill.green { background: #1a7340; color: #fff; box-shadow: none; }

/* ribbons */
.ribbon { flex: none; font-size: 11px; line-height: 12px; }
.big { display: block; text-align: center; }
.pic { display: flex; align-items: center; justify-content: center; gap: 5px; height: 30px; margin-bottom: 4px; }
.w42 { width: 42px; } .w46 { width: 46px; } .w52 { width: 52px; } .w64 { width: 64px; }
.off { color: #aaa; }
.mute { color: #8c8c8c; }
.strong { color: #111; font-weight: 500; }
.ppt-ribbon { height: 89px; display: grid; grid-template-columns: 123px 1fr 218px 89px; border-bottom: 1px solid #bdbdbd; padding: 4px 0 8px; }
.group { border-right: 1px solid #c6c6c6; display: flex; flex-direction: column; justify-content: space-between; height: 77px; }
.group:last-child { border-right: 0; }
.row { display: flex; padding-top: 4px; }
.caption { text-align: center; margin-bottom: -6px; }
.g-layouts .row { padding-left: 10px; }
.g-styles .row { padding: 0 9px 0 7px; }
.g-styles .big { padding-top: 4px; }
.g-data .row { padding-left: 10px; }
.g-type .row { padding-left: 7px; }
.g-type .caption { padding-right: 10px; }
.gallery { flex: 1; height: 57px; background: #fff; border: 1px solid #c4c4c4; border-radius: 3px; display: flex; align-items: center; padding-left: 16px; margin-top: 1px; min-width: 0; }
.style { flex: 1; height: 53px; border-radius: 4px; }
.style svg { width: 84px; height: 44px; }
.style.on { border: 1px solid #ee9384; background: linear-gradient(90deg, #fbe3df 5px, #fff 5px, #fff calc(100% - 5px), #fbe3df calc(100% - 5px)); }
.style.pale svg { opacity: .6; }
.style.metal svg { background: radial-gradient(ellipse at 30% 50%, #f8f8f8 20%, #b9b9b9); }
.style.framed svg { outline: 1px solid #e2e2e2; }
.next { width: 18px; color: #222; }
.next svg { transform: rotate(-90deg); }

.xls-ribbon { height: 74px; padding-top: 4px; display: flex; border-bottom: 2px solid #d6d6d6; color: #8c8c8c; }
.xg { height: 60px; border-right: 1px solid #cfcfcf; flex: none; }
.xg .chev { color: #999; }
.xg .chev.dark { color: #111; }
.xg:last-child { border-right: 0; }
.stack { display: flex; flex-direction: column; gap: 1px; padding-top: 1px; }
.stack button { flex: none; height: 20px; justify-content: flex-start; gap: 7px; }
.x-clip { width: 102px; display: flex; padding-left: 10px; }
.x-clip .big { padding-top: 4px; }
.x-clip .stack { padding-left: 5px; }
.x-font { width: 264px; padding: 5px 0 0 10px; }
.line { display: flex; align-items: center; }
.combo { position: relative; display: block; height: 24px; }
.combo select { appearance: none; width: 100%; height: 24px; border: 1px solid #d2d2d2; border-radius: 2px; background: #fff; padding: 0 5px; font-size: 12px; color: #777; }
.combo .chev { position: absolute; right: 4px; top: 9px; color: #666; pointer-events: none; }
.c-font { width: 138px; margin-right: 3px; }
.c-size { width: 52px; margin-right: 7px; }
.c-num { width: 152px; }
.grow { font-size: 17px; color: #aaa; margin-right: 11px; }
.shrink { font-size: 15px; color: #aaa; }
.line sup { font-size: 10px; line-height: 10px; color: #8fb9dc; align-self: flex-start; }
.tools { height: 28px; margin-top: 5px; gap: 9px; padding-left: 2px; }
.tools .bar { width: 1px; height: 20px; background: #cfcfcf; }
.t { font-size: 15px; color: #a2a2a2; width: 16px; }
.b { font-weight: 700; }
.i { font-family: "Liberation Serif", serif; font-style: italic; }
.u { text-decoration: underline; }
.fontcol { font-size: 15px; line-height: 14px; width: 16px; border-bottom: 4px solid #f5a8a8; color: #a2a2a2; }
.x-align { width: 124px; padding: 1px 0 0 12px; display: grid; grid-template-columns: 24px 24px 24px 22px 10px; grid-template-rows: 21px 21px 21px; align-items: center; }
.x-align .bar { width: 1px; height: 18px; background: #cfcfcf; margin-left: 2px; }
.wrap { font-size: 10px; line-height: 9px; color: #aaa; }
.wrap svg, .orient svg { display: inline-block; vertical-align: -2px; }
.orient { color: #aaa; font-size: 10px; white-space: nowrap; margin-left: -10px; }
.x-num { width: 172px; padding: 5px 0 0 9px; }
.pc { font-size: 18px; width: 18px; }
.comma { font: 700 30px/10px "Liberation Serif", serif; width: 10px; height: 24px; align-items: flex-start; }
.dec { flex-direction: column; align-items: flex-end; font-size: 9px; line-height: 9px; color: #aaa; }
.dec span { display: flex; align-items: center; }
.x-list { padding-left: 12px; display: flex; flex-direction: column; align-items: flex-start; gap: 1px; }
.x-list button { flex: none; height: 21px; gap: 6px; font-size: 11px; }
.x-list .chev { margin-left: 3px; }
.x-styles { width: 173px; }
.x-cells { width: 95px; }
.x-edit { width: 151px; display: flex; padding-left: 13px; }
.x-edit .stack { width: 32px; }
.x-edit .big, .x-an .big, .x-pdf .big { padding-top: 4px; }
.x-edit .big + .big { margin-left: 2px; }
.x-edit .pic { gap: 3px; }
.x-an { width: 64px; padding-left: 5px; }
.x-pdf { flex: 1; padding-left: 11px; }
.az { font-size: 13px; line-height: 14px; color: #aaa; }
.az b { display: block; font-weight: 400; color: #8fb9dc; }

/* slide editor */
.editor { flex: 1; min-height: 0; display: grid; grid-template: 25px 1fr / 24px 1fr; background: #f1f1f1; border-left: 4px solid #ececec; margin-bottom: 5px; border-bottom: 1px solid #bbb; }
.hruler { grid-column: 1 / -1; height: 17px; background: #fdfdfd; border-bottom: 1px solid #ccc; border-left: 16px solid #ececec; padding: 0 38px 0 45px; }
.hruler .scale { display: flex; height: 16px; position: relative; }
.scale::before, .scale::after { content: ""; position: absolute; background: #aaa; }
.hruler .scale::before { width: 1px; height: 14px; left: -9px; top: 5px; }
.hruler .scale::after { width: 1px; height: 14px; right: -10px; top: 5px; }
.hruler span { flex: 1; text-align: center; font-size: 10px; line-height: 12px; color: #777;
  background: linear-gradient(#aaa, #aaa) 0 100% / 1px 9px no-repeat, linear-gradient(#aaa, #aaa) 25% 100% / 1px 4px no-repeat, linear-gradient(#aaa, #aaa) 50% 100% / 1px 4px no-repeat, linear-gradient(#aaa, #aaa) 75% 100% / 1px 4px no-repeat; }
.vruler { width: 17px; background: #fdfdfd; border-left: 1px solid #bbb; border-right: 1px solid #ccc; display: flex; align-items: center; }
.vruler .scale { display: flex; flex-direction: column; width: 15px; height: 642px; position: relative; }
.vruler .scale::before { height: 1px; width: 14px; left: 4px; top: 2px; }
.vruler .scale::after { height: 1px; width: 14px; left: 4px; bottom: 2px; }
.vruler span { flex: 1; width: 15px; writing-mode: vertical-rl; transform: rotate(180deg); text-align: center; font-size: 10px; line-height: 10px; padding-left: 5px; color: #777;
  background: linear-gradient(#aaa, #aaa) 0 100% / 9px 1px no-repeat, linear-gradient(#aaa, #aaa) 0 25% / 4px 1px no-repeat, linear-gradient(#aaa, #aaa) 0 50% / 4px 1px no-repeat, linear-gradient(#aaa, #aaa) 0 75% / 4px 1px no-repeat; }
.canvas { position: relative; background: #e8e8e8; padding: 1px 28px 0 29px; display: flex; flex-direction: column; justify-content: center; min-width: 0; min-height: 0; }
.slide { aspect-ratio: 1132 / 637; background: #fff; box-shadow: 0 4px 24px #0002, 0 0 1px #0006; padding: 30px 26px 0 33px; display: flex; flex-direction: column; }
.frame { flex: 1; margin: 0; border: 1px solid #999; padding: 3px; position: relative; }
.chart { height: 100%; border: 1px solid #bbb; padding: 11px 22px 0 0; display: flex; flex-direction: column; font: 14px/16px "Liberation Sans", Arial, sans-serif; color: #555; }
.chart h2 { margin: 0; font-size: 22px; line-height: 22px; font-weight: 400; text-align: center; padding-left: 20px; }
.plot { flex: 1; display: grid; grid-template-columns: 86px 1fr; margin-top: 14px; }
.cats { display: flex; flex-direction: column; text-align: right; padding-right: 12px; }
.cats li { flex: 1; display: flex; align-items: center; justify-content: flex-end; white-space: nowrap; }
.lines { display: flex; border-right: 1px solid #d4d4d4; }
.lines i { flex: 1; border-left: 1px solid #d4d4d4; }
.axis { display: flex; justify-content: space-between; margin: 8px 0 0 86px; }
.axis span { width: 0; display: flex; justify-content: center; }
.legend { display: flex; justify-content: center; gap: 15px; padding: 11px 0 9px 22px; }
.legend li { display: flex; align-items: center; gap: 3px; }
.legend li::before { content: ""; width: 7px; height: 7px; background: currentColor; }
.legend .s1::before { background: #1f85f5; } .legend .s2::before { background: #0d3ba1; } .legend .s3::before { background: #3ccca0; }
.knob { position: absolute; width: 9px; height: 9px; background: #fff; border: 1px solid #999; border-radius: 1px; z-index: 2; }
.tl, .ml, .bl { left: -4px; } .tc, .bc { left: calc(50% - 5px); } .tr, .mr, .br { right: -4px; }
.tl, .tc, .tr { top: -3px; } .ml, .mr { top: calc(50% - 5px); } .bl, .bc, .br { bottom: -3px; }
.logo { height: 60px; display: grid; justify-content: center; align-content: start; padding: 16px 8px 0 0; font: 28px/26px Lato, sans-serif; color: #6b7482; }
.tall { position: relative; }
.tall::before { content: ""; position: absolute; right: 2px; top: -4px; width: 3px; height: 16px; background: #6b7482; }
.sub { font-size: 9px; line-height: 9px; padding-left: 56px; color: #8a919c; }
.guide-v { position: absolute; left: 50%; top: 0; bottom: 0; width: 1px; background: repeating-linear-gradient(#8c8c8c 0 4px, transparent 4px 6px); }
.guide-h { position: absolute; top: 50%; left: 0; right: 0; height: 1px; background: repeating-linear-gradient(90deg, #8c8c8c 0 4px, transparent 4px 6px); }

/* formula bar */
.fbar { flex: none; height: 26px; display: flex; align-items: center; background: #fdfdfd; border-bottom: 1px solid #aaa; font-size: 13px; }
.namebox { width: 84px; height: 25px; display: flex; align-items: center; padding: 0 4px 0 9px; border-right: 2px solid #b9b9b9; background: #fff; }
.namebox input { flex: 1; min-width: 0; border: 0; padding: 0; outline: 0; }
.f-x { margin-left: 13px; } .f-ok { margin-left: 16px; }
.f-fx { margin-left: 15px; width: 14px; font: italic 17px/20px "Liberation Serif", serif; color: #333; }
.formula { flex: 1; border: 0; border-left: 1px solid #ccc; margin-left: 7px; padding: 0 0 0 7px; background: none; height: 18px; }
.f-drop { margin-right: 4px; }

/* sheet */
.sheet { flex: 1; min-height: 0; overflow: hidden; background: #fff; border-top: 1px solid #bbb; margin-top: 1px; }
table { table-layout: fixed; width: calc(100% + 21px); border-collapse: separate; border-spacing: 0; font: 11px/14px Lato, "Liberation Sans", sans-serif; color: #000; }
th { font-family: "Open Sans", sans-serif; font-weight: 400; font-size: 10px; color: #555; background: #f5f5f5; padding: 0; }
thead th { height: 21px; border-right: 1px solid #e0e0e0; border-bottom: 1px solid #bbb; background: linear-gradient(#fdfdfd, #f1f1f1); }
thead th:first-child { width: 22px; background: linear-gradient(135deg, transparent 60%, #d0d0d0 60%); border-right-color: #bbb; }
thead th.sel { background: #e9e9e9; color: #1e7145; border-bottom: 2px solid #185c37; font-weight: 600; }
tbody th { border-right: 1px solid #bbb; border-bottom: 1px solid #e6e6e6; text-align: center; line-height: 13px; }
tbody th.sel { color: #1e7145; font-weight: 600; border-right: 2px solid #185c37; }
tbody tr { height: 16px; }
tbody tr:nth-child(8n+3), tbody tr:nth-child(8n+5), tbody tr:nth-child(8n) { height: 15px; }
td { padding: 0 2px; border-right: 1px solid #cdcdcd; border-bottom: 1px solid #cdcdcd; line-height: 14px; white-space: nowrap; position: relative; }
td.n { text-align: right; }
td.lst-l, td.lst-r { border-right-color: #3a36c8; }
td.lst-b { border-bottom-color: #3a36c8; }
.ref { position: absolute; inset: -2px; border: 2px dashed #1e6a45; background: #3a64c01c; }
.ref b { position: absolute; width: 5px; height: 5px; background: #2f62c4; }
.ref b:nth-child(1) { left: -3px; top: -3px; } .ref b:nth-child(2) { right: -3px; top: -3px; } .ref b:nth-child(3) { left: -3px; bottom: -3px; } .ref b:nth-child(4) { right: -3px; bottom: -3px; }
.edit { position: absolute; inset: -2px; border: 2px solid #1a6b3c; background: #fff; padding: 0 2px; line-height: 15px; z-index: 1; }
.edit::after { content: ""; position: absolute; right: -3px; bottom: -3px; width: 5px; height: 5px; background: #1a6b3c; }
.edit em { font-style: normal; color: #3f62c4; }
.grip { position: absolute; right: 0; bottom: 0; width: 4px; height: 4px; background: #2a2ab4; clip-path: polygon(100% 0, 100% 100%, 0 100%); }

.sheetbar { flex: none; height: 25px; margin-bottom: 1px; background: #ededed; border-top: 1px solid #c6c6c6; display: flex; align-items: flex-start; }
.nav { height: 25px; margin-left: 14px; }
.nav + .nav { margin-left: 16px; }
.tab { width: 77px; height: 23px; margin-left: 15px; background: #fff; border-radius: 0 0 3px 3px; box-shadow: 0 1px 1px #888; color: #1e7b45; font-weight: 700; font-size: 12px; margin-top: -1px; padding-top: 2px; }
.add { width: 38px; height: 22px; border-right: 1px solid #c4c4c4; margin-top: 1px; }

/* status bars */
.status { flex: none; height: 22px; display: flex; align-items: center; background: linear-gradient(#dedede, #cfcfcf); border-top: 1px solid #a8a8a8; color: #4d4d4d; }
.status button { gap: 2px; }
.s-slide { padding-left: 23px; width: 107px; }
.s-lang { width: 146px; }
.right { margin-left: auto; display: flex; align-items: center; height: 21px; }
.s-notes { width: 52px; margin-right: 18px; }
.s-comm { width: 78px; margin-right: 8px; }
.view { width: 35px; height: 21px; color: #555; }
.view.on { background: #9b9b9b; width: 36px; }
.sign { width: 9px; height: 9px; background: linear-gradient(#444, #444) center / 9px 2px no-repeat; }
.plus { background: linear-gradient(#444, #444) center / 9px 2px no-repeat, linear-gradient(#444, #444) center / 2px 9px no-repeat; }
.minus { margin-left: 7px; }
.zoom { appearance: none; width: 98px; height: 16px; margin: 0 6px; background: linear-gradient(#909090, #909090) center / 100% 4px no-repeat; }
.zoom::-webkit-slider-thumb { appearance: none; width: 16px; height: 16px; border-radius: 50%; background: #fff; box-shadow: 0 0 2px #0006; }
.pct { width: 48px; text-align: right; }
.s-fit { margin: 0 23px 0 20px; }
.s-point { padding-left: 23px; width: 71px; }
.s-macro { margin-right: 16px; }
.xls .pct { margin-right: 24px; }
```
FILE: app.js
```
// Rulers: centimetres counted outwards from the slide centre
function ruler(id, reach) {
  const el = document.getElementById(id);
  for (let n = -reach; n <= reach; n++) {
    const mark = document.createElement('span');
    mark.textContent = Math.abs(n);
    el.append(mark);
  }
}
ruler('hscale', 16);
ruler('vscale', 9);

// Worksheet
const cols = 'ABCDEFGHIJKLMNOPQRST'.split('');
const cells = { B1: 'Value', C1: 'Change', E2: '4.5', F1: 'Column1', G1: 'Series 1', H1: 'Series 2', I1: 'Series 3' };
const values = ['4.3', '2.5', '3.5', '4.5', '2.4', '4.4', '1.8', '2.8'];
const changes = ['+2', '-2', '-3', '+5', '-5', '+3', '+2', '-2'];
values.forEach((v, i) => {
  const r = i + 2;
  cells['A' + r] = cells['F' + r] = 'Category ' + (i + 1);
  cells['B' + r] = v;
  cells['C' + r] = changes[i];
});
const grid = document.getElementById('grid');
grid.tHead.innerHTML = '<tr><th></th>' + cols.map(c => `<th${c === 'G' ? ' class="sel"' : ''}>${c}</th>`).join('') + '</tr>';
let html = '';
for (let r = 1; r <= 75; r++) {
  html += `<tr><th${r === 2 ? ' class="sel"' : ''}>${r}</th>`;
  for (const c of cols) {
    const text = cells[c + r] || '';
    const cls = [];
    if (/^[-+\d]/.test(text)) cls.push('n');
    if (r <= 9 && c === 'E') cls.push('lst-l');
    if (r <= 9 && c === 'I') cls.push('lst-r');
    if (r === 9 && 'FGHI'.includes(c)) cls.push('lst-b');
    let extra = '';
    if (c + r === 'B2') extra = '<span class="ref"><b></b><b></b><b></b><b></b></span>';
    if (c + r === 'G2') extra = '<span class="edit">=<em>B2</em></span>';
    if (c + r === 'I9') extra = '<span class="grip"></span>';
    html += `<td class="${cls.join(' ')}">${text}${extra}</td>`;
  }
  html += '</tr>';
}
grid.tBodies[0].innerHTML = html;
```
